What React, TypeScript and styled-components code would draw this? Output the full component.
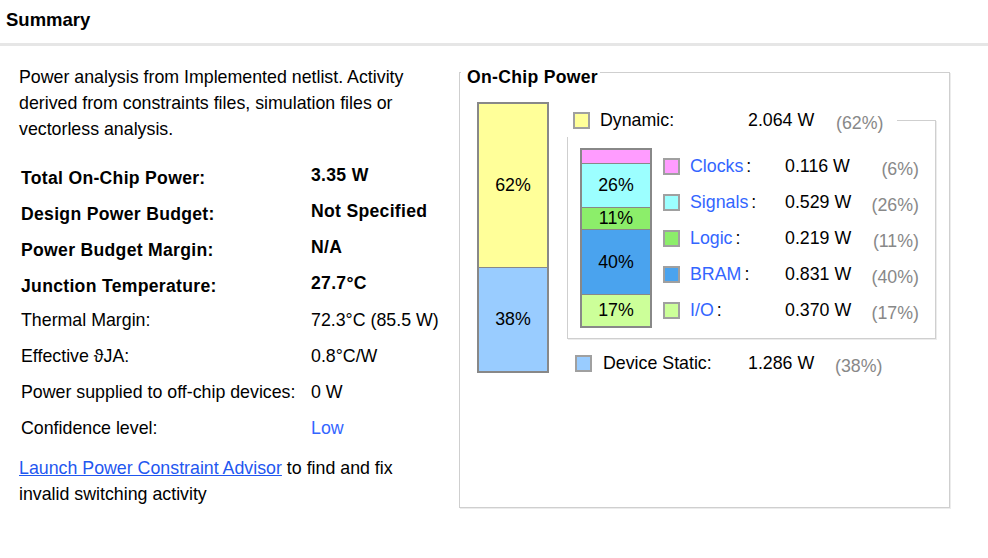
import React from "react";
import styled, { createGlobalStyle } from "styled-components";

const Global = createGlobalStyle`
  html, body { margin: 0; padding: 0; background: #fff; }
  body { font-family: "Liberation Sans", Arial, sans-serif; color: #000; }
  * { box-sizing: border-box; }
`;

const Page = styled.div`
  width: 988px;
  height: 558px;
  background: #fff;
  overflow: hidden;
`;

const Header = styled.div`
  height: 46px;
  padding-left: 6px;
  line-height: 40px;
  font-size: 18.5px;
  font-weight: bold;
  border-bottom: 3px solid #e6e6e6;
`;

const Body = styled.div`
  display: flex;
  padding-left: 19px;
`;

const LeftCol = styled.div`
  width: 440px;
  padding-top: 18px;
  font-size: 17.8px;
`;

const Para = styled.p`
  margin: 0;
  max-width: 420px;
  line-height: 26px;
`;

const Facts = styled.div`
  margin: 18px 0 7px 2px;
  display: grid;
  grid-template-columns: 290px auto;
  grid-auto-rows: 36px;
`;

const FactLabel = styled.div<{ $bold?: boolean }>`
  display: flex;
  align-items: center;
  padding-bottom: ${(p) => (p.$bold ? "0" : "4px")};
  font-weight: ${(p) => (p.$bold ? "bold" : "normal")};
  font-size: ${(p) => (p.$bold ? "17.6px" : "17.8px")};
  letter-spacing: ${(p) => (p.$bold ? "0.3px" : "0")};
`;

const FactValue = styled.div<{ $bold?: boolean; $link?: boolean }>`
  display: flex;
  align-items: center;
  padding-bottom: ${(p) => (p.$bold ? "6px" : "4px")};
  font-weight: ${(p) => (p.$bold ? "bold" : "normal")};
  font-size: ${(p) => (p.$bold ? "17.6px" : "17.8px")};
  letter-spacing: ${(p) => (p.$bold ? "0.3px" : "0")};
  color: ${(p) => (p.$link ? "#3366ff" : "#000")};
`;

const Link = styled.a`
  color: #1f57f0;
  text-decoration: underline;
  cursor: pointer;
`;

const Panel = styled.div`
  margin-top: 26px;
  width: 491px;
  height: 436px;
  border: 1px solid #cfcfcf;
  box-shadow: 1px 1px 0 #ececec;
  padding-left: 17px;
`;

const PanelTitle = styled.div`
  margin: -5px 0 0 -16px;
  width: fit-content;
  padding: 0 2px 0 6px;
  background: #fff;
  line-height: 18px;
  font-size: 17.6px;
  font-weight: bold;
  letter-spacing: 0.3px;
`;

const ChartRow = styled.div`
  margin-top: 16px;
  display: flex;
  gap: 18px;
  font-size: 17.8px;
`;

const Bar = styled.div<{ $w: number; $h: number }>`
  width: ${(p) => p.$w}px;
  height: ${(p) => p.$h}px;
  border: 2px solid #888;
  display: flex;
  flex-direction: column;
`;

const Segment = styled.div<{ $color: string; $sep?: boolean }>`
  background: ${(p) => p.$color};
  border-top: ${(p) => (p.$sep ? "1px solid #888" : "none")};
  display: flex;
  align-items: center;
  justify-content: center;
  flex-shrink: 0;
`;

const Breakdown = styled.div`
  width: 369px;
  display: flex;
  flex-direction: column;
`;

const GroupHead = styled.div`
  position: relative;
  z-index: 1;
  margin-top: 1px;
  margin-bottom: -17px;
  width: 330px;
  height: 34px;
  background: #fff;
  padding-left: 6px;
  display: flex;
  align-items: center;
`;

const GroupBox = styled.div`
  height: 219px;
  border: 1px solid #cfcfcf;
  box-shadow: 1px 1px 0 #ececec;
  padding: 27px 0 0 12px;
  display: flex;
  gap: 11px;
`;

const Legend = styled.div`
  display: flex;
  flex-direction: column;
`;

const LegendRow = styled.div`
  height: 36px;
  display: flex;
  align-items: center;
`;

const Swatch = styled.span<{ $color: string }>`
  width: 17px;
  height: 17px;
  border: 2px solid #a0a0a0;
  background: ${(p) => p.$color};
  flex-shrink: 0;
`;

const Name = styled.span<{ $w: number; $gap: number }>`
  width: ${(p) => p.$w}px;
  margin-left: ${(p) => p.$gap}px;
  flex-shrink: 0;
  white-space: nowrap;
`;

const BlueName = styled.span`
  color: #3366ff;
  margin-right: 3px;
`;

const Watts = styled.span<{ $w: number }>`
  width: ${(p) => p.$w}px;
  flex-shrink: 0;
  white-space: nowrap;
`;

const Pct = styled.span<{ $w?: number }>`
  color: #888;
  padding-top: 6px;
  white-space: nowrap;
  ${(p) => (p.$w ? `width: ${p.$w}px; text-align: right;` : "")}
`;

const StaticRow = styled.div`
  margin-top: 7px;
  height: 34px;
  padding-left: 8px;
  display: flex;
  align-items: center;
`;

const facts = [
  { label: "Total On-Chip Power:", value: "3.35 W", bold: true },
  { label: "Design Power Budget:", value: "Not Specified", bold: true },
  { label: "Power Budget Margin:", value: "N/A", bold: true },
  { label: "Junction Temperature:", value: "27.7°C", bold: true },
  { label: "Thermal Margin:", value: "72.3°C (85.5 W)" },
  { label: "Effective \u03D1JA:", value: "0.8°C/W" },
  { label: "Power supplied to off-chip devices:", value: "0 W" },
  { label: "Confidence level:", value: "Low", link: true },
];

const dyn = [
  { name: "Clocks", w: "0.116 W", pct: "(6%)", color: "#ff9cff", h: 13, show: false },
  { name: "Signals", w: "0.529 W", pct: "(26%)", color: "#9cffff", h: 44, show: true, label: "26%" },
  { name: "Logic", w: "0.219 W", pct: "(11%)", color: "#8cee6a", h: 22, show: true, label: "11%" },
  { name: "BRAM", w: "0.831 W", pct: "(40%)", color: "#4aa3ee", h: 65, show: true, label: "40%" },
  { name: "I/O", w: "0.370 W", pct: "(17%)", color: "#ccff99", h: 32, show: true, label: "17%" },
];

export default function App() {
  return (
    <Page>
      <Global />
      <Header>Summary</Header>
      <Body>
        <LeftCol>
          <Para>
            Power analysis from Implemented netlist. Activity derived from constraints files, simulation files or
            vectorless analysis.
          </Para>
          <Facts>
            {facts.map((f) => (
              <React.Fragment key={f.label}>
                <FactLabel $bold={f.bold}>{f.label}</FactLabel>
                <FactValue $bold={f.bold} $link={f.link}>
                  {f.value}
                </FactValue>
              </React.Fragment>
            ))}
          </Facts>
          <Para>
            <Link>Launch Power Constraint Advisor</Link> to find and fix invalid switching activity
          </Para>
        </LeftCol>
        <Panel>
          <PanelTitle>On-Chip Power</PanelTitle>
          <ChartRow>
            <Bar $w={72} $h={271}>
              <Segment $color="#ffff99" style={{ height: 163 }}>62%</Segment>
              <Segment $color="#99ccff" $sep style={{ flex: 1 }}>38%</Segment>
            </Bar>
            <Breakdown>
              <GroupHead>
                <Swatch $color="#ffff99" />
                <Name $w={148} $gap={10}>Dynamic:</Name>
                <Watts $w={88}>2.064 W</Watts>
                <Pct>(62%)</Pct>
              </GroupHead>
              <GroupBox>
                <Bar $w={72} $h={180}>
                  {dyn.map((d, i) => (
                    <Segment key={d.name} $color={d.color} $sep={i > 0} style={{ height: d.h }}>
                      {d.show ? d.label : null}
                    </Segment>
                  ))}
                </Bar>
                <Legend>
                  {dyn.map((d) => (
                    <LegendRow key={d.name}>
                      <Swatch $color={d.color} />
                      <Name $w={95} $gap={10}>
                        <BlueName>{d.name}</BlueName>:
                      </Name>
                      <Watts $w={80}>{d.w}</Watts>
                      <Pct $w={54}>{d.pct}</Pct>
                    </LegendRow>
                  ))}
                </Legend>
              </GroupBox>
              <StaticRow>
                <Swatch $color="#99ccff" />
                <Name $w={145} $gap={11}>Device Static:</Name>
                <Watts $w={87}>1.286 W</Watts>
                <Pct>(38%)</Pct>
              </StaticRow>
            </Breakdown>
          </ChartRow>
        </Panel>
      </Body>
    </Page>
  );
}
